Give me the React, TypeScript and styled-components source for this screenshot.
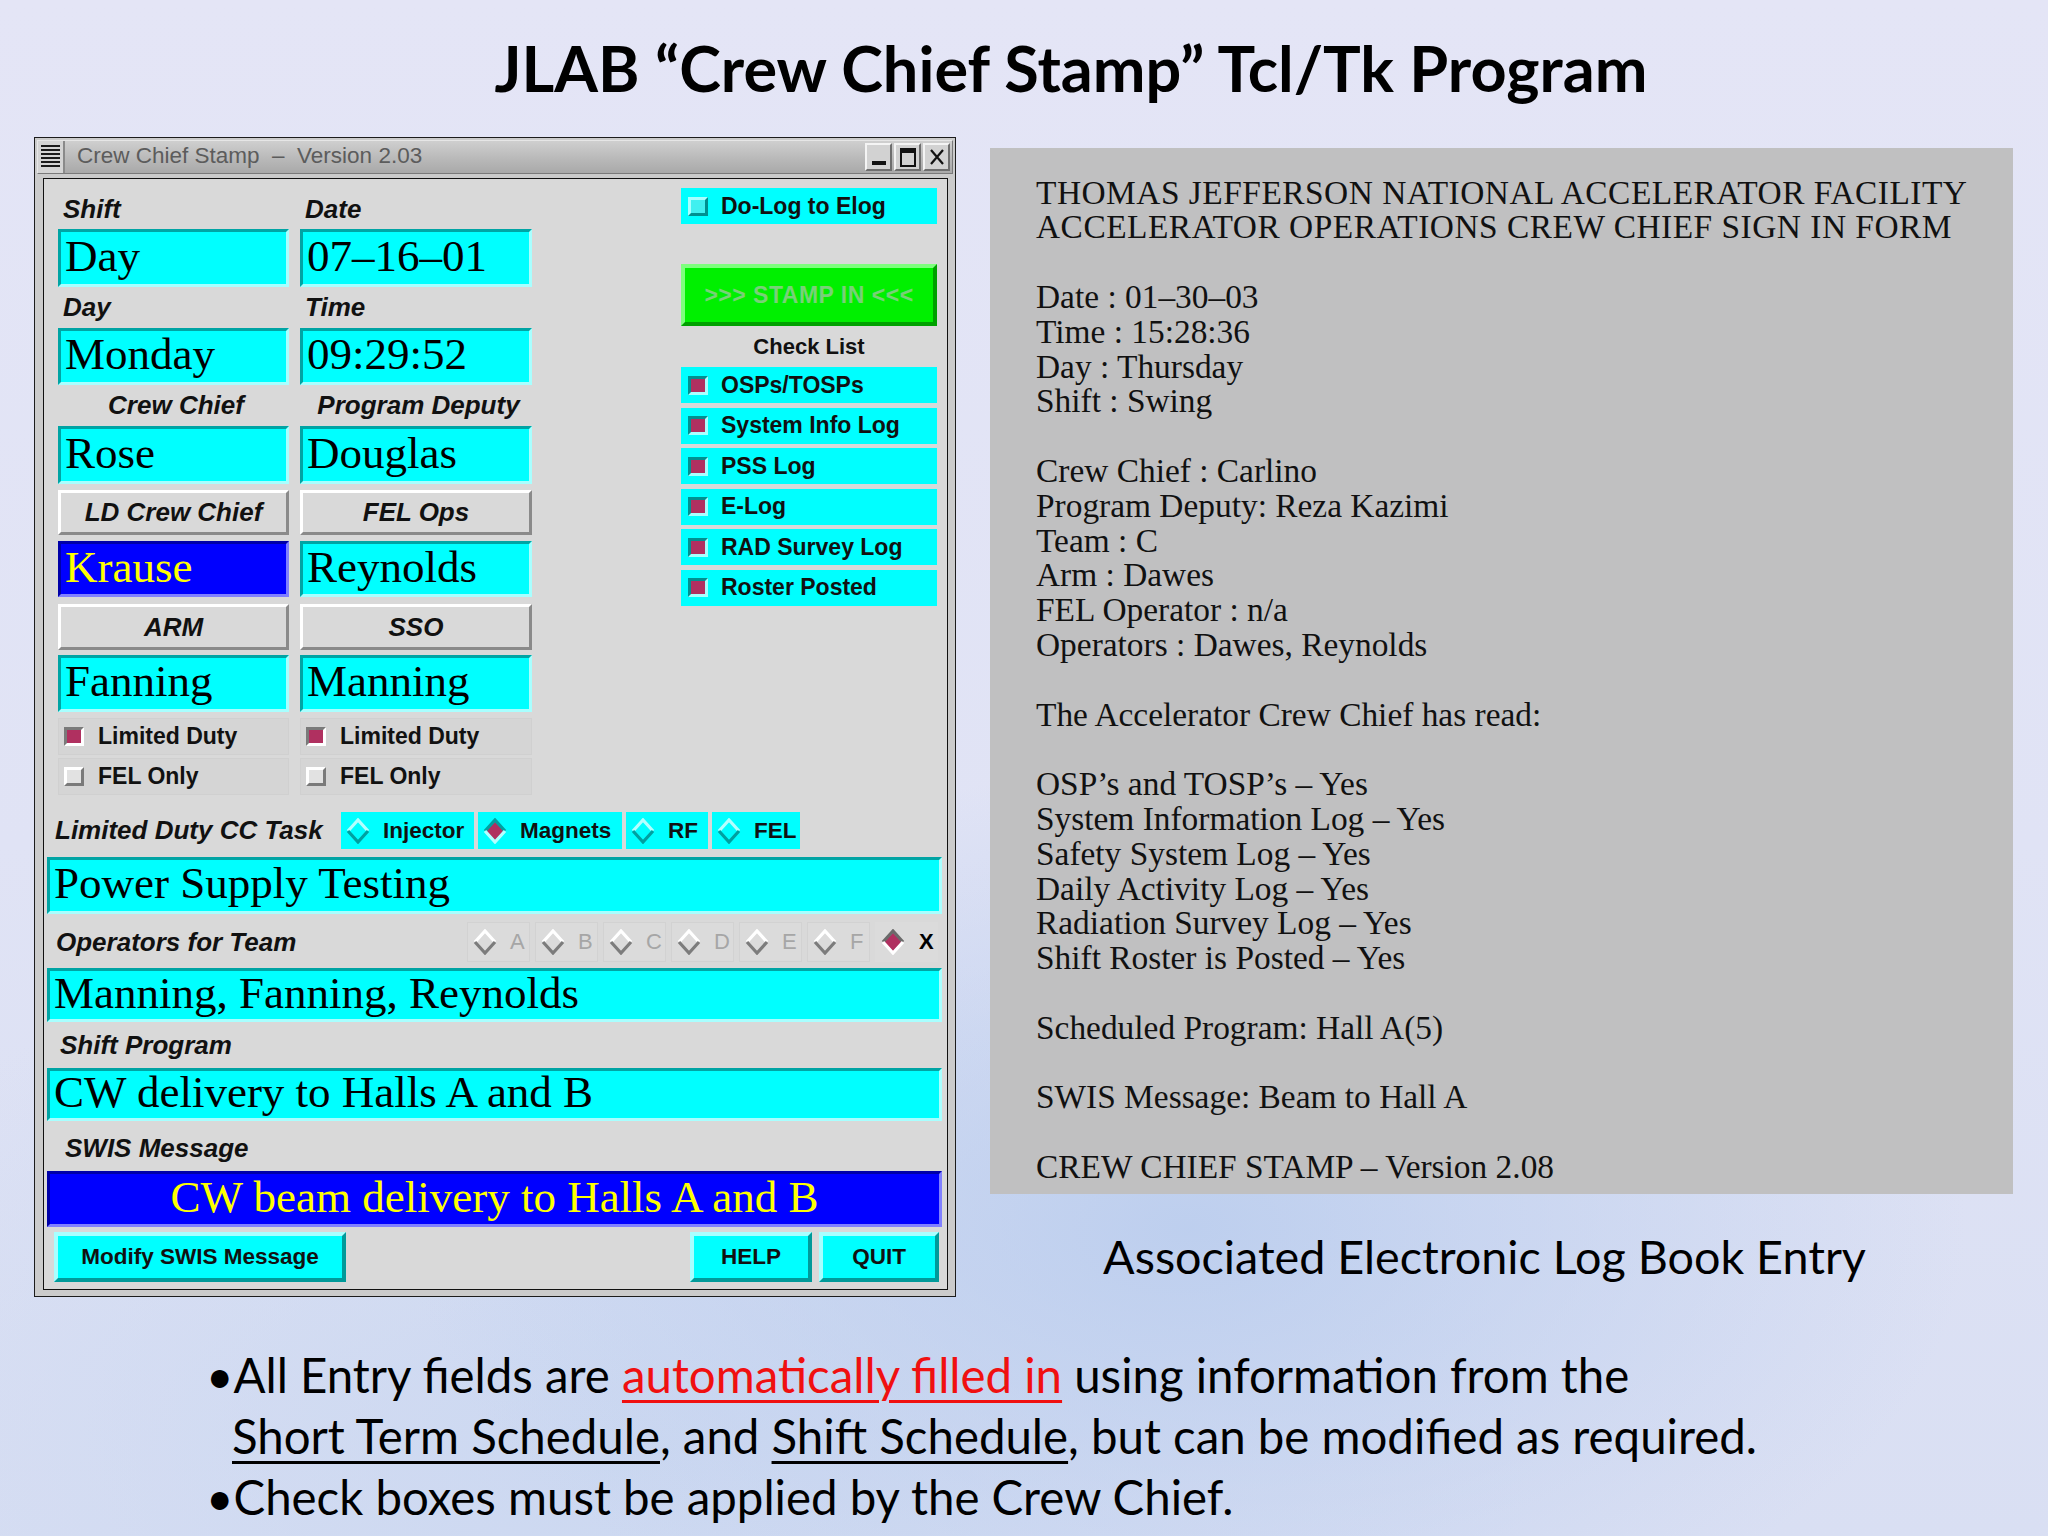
import React from "react";
import styled, { createGlobalStyle, css } from "styled-components";

const CYAN = "#00ffff";
const TEAL = "#00a4a4";
const PALE = "#a8ffff";
const MAROON = "#b03060";
const GREY = "#d9d9d9";

const GlobalStyle = createGlobalStyle`
  html, body {
    margin: 0;
    padding: 0;
  }
  body {
    width: 2048px;
    height: 1536px;
    overflow: hidden;
    font-family: "Liberation Sans", Arial, sans-serif;
  }
`;

const bevel = (light: string, dark: string, w = 3) => css`
  border-style: solid;
  border-width: ${w}px;
  border-color: ${light} ${dark} ${dark} ${light};
`;

const Page = styled.div`
  width: 2048px;
  height: 1536px;
  box-sizing: border-box;
  display: flex;
  flex-direction: column;
  background:
    radial-gradient(ellipse 38% 30% at 58% 80%, rgba(188, 206, 238, 0.95), rgba(188, 206, 238, 0) 100%),
    radial-gradient(ellipse 45% 35% at 30% 95%, rgba(200, 214, 240, 0.8), rgba(200, 214, 240, 0) 100%),
    linear-gradient(180deg, #e4e5f6 0%, #e0e3f5 55%, #d9dff3 100%);
`;

const Header = styled.h1`
  margin: 0;
  height: 137px;
  box-sizing: border-box;
  padding: 30px 0 0 94px;
  text-align: center;
  font-family: Lato, "Open Sans", sans-serif;
  font-weight: 700;
  font-size: 63px;
  line-height: 76px;
  color: #000;
`;

const Main = styled.div`
  display: flex;
  padding-left: 34px;
  height: 1160px;
`;

/* ---------- Tk window ---------- */

const Window = styled.div`
  width: 922px;
  height: 1160px;
  box-sizing: border-box;
  border: 1px solid #1c1c1c;
  background: #cbcbcb;
  padding: 2px;
  display: flex;
  flex-direction: column;
`;

const TitleBar = styled.div`
  height: 32px;
  display: flex;
  align-items: stretch;
  background: linear-gradient(180deg, #cfcfcf 0%, #b9b9b9 55%, #a9a9a9 100%);
  ${bevel("#e6e6e6", "#7a7a7a", 1)};
`;

const MenuGrip = styled.div`
  width: 27px;
  box-sizing: border-box;
  padding: 4px 3px;
  border-right: 2px solid #8a8a8a;
  background: #d4d4d4;

  &::before {
    content: "";
    display: block;
    height: 100%;
    background: repeating-linear-gradient(180deg, #1a1a1a 0 2px, #d4d4d4 2px 4px);
  }
`;

const WinTitle = styled.div`
  flex: 1;
  padding-left: 12px;
  font-family: "Liberation Sans", Arial, sans-serif;
  font-size: 22.5px;
  line-height: 30px;
  color: #5c5c5c;
  white-space: pre;
`;

const WinButtons = styled.div`
  display: flex;
  gap: 2px;
  padding: 2px 2px 2px 0;
`;

const WinButton = styled.div`
  width: 27px;
  box-sizing: border-box;
  background: #d2d2d2;
  ${bevel("#f4f4f4", "#6e6e6e", 2)};
  display: flex;
  align-items: center;
  justify-content: center;
  font-size: 22px;
  line-height: 1;
  color: #111;
`;

const MinGlyph = styled.span`
  width: 14px;
  height: 4px;
  background: #111;
  margin-top: 12px;
`;

const MaxGlyph = styled.span`
  width: 12px;
  height: 12px;
  border: 2px solid #111;
  border-top-width: 5px;
`;

const Client = styled.div`
  flex: 1;
  margin: 4px 5px 4px 6px;
  border: 1px solid #111;
  background: ${GREY};
  display: flex;
  flex-direction: column;
  padding: 0 5px 0 3px;
`;

const Upper = styled.div`
  display: flex;
  padding: 0 5px 0 11px;
  height: 616px;
`;

const LeftGrid = styled.div`
  display: grid;
  grid-template-columns: 231px 232px;
  column-gap: 11px;
  align-content: start;
  padding-top: 11px;
`;

const RightCol = styled.div`
  margin-left: auto;
  width: 256px;
  padding-top: 9px;
  display: flex;
  flex-direction: column;
`;

const Label = styled.div<{ $h: number; $center?: boolean; $indent?: number }>`
  height: ${(p) => p.$h}px;
  display: flex;
  align-items: center;
  justify-content: ${(p) => (p.$center ? "center" : "flex-start")};
  padding-left: ${(p) => p.$indent ?? 5}px;
  font-family: "Liberation Sans", Arial, sans-serif;
  font-style: italic;
  font-weight: 700;
  font-size: 26px;
  color: #111;
  white-space: nowrap;
`;

const Field = styled.div<{ $h: number; $mt?: number; $blue?: boolean; $center?: boolean }>`
  height: ${(p) => p.$h}px;
  margin-top: ${(p) => p.$mt ?? 0}px;
  box-sizing: border-box;
  padding: 0 4px 4px;
  overflow: hidden;
  white-space: nowrap;
  font-family: "Liberation Serif", "Times New Roman", serif;
  font-size: 45px;
  line-height: ${(p) => p.$h - 10}px;
  text-align: ${(p) => (p.$center ? "center" : "left")};
  background: ${(p) => (p.$blue ? "#0000ff" : CYAN)};
  color: ${(p) => (p.$blue ? "#ffff00" : "#000")};
  ${(p) => (p.$blue ? bevel("#0000a8", "#8080ff") : bevel(TEAL, PALE))};
`;

const GreyButton = styled.div<{ $mt: number; $h: number }>`
  height: ${(p) => p.$h}px;
  margin-top: ${(p) => p.$mt}px;
  box-sizing: border-box;
  background: ${GREY};
  ${bevel("#ffffff", "#8a8a8a")};
  display: flex;
  align-items: center;
  justify-content: center;
  font-style: italic;
  font-weight: 700;
  font-size: 26px;
  color: #111;
`;

const CheckRow = styled.div<{ $mt: number; $cyan?: boolean }>`
  height: ${(p) => (p.$cyan ? 36 : 37)}px;
  margin-top: ${(p) => p.$mt}px;
  box-sizing: border-box;
  display: flex;
  align-items: center;
  gap: ${(p) => (p.$cyan ? 13 : 14)}px;
  padding-left: ${(p) => (p.$cyan ? 7 : 5)}px;
  background: ${(p) => (p.$cyan ? CYAN : "#d5d5d5")};
  border: ${(p) => (p.$cyan ? "none" : "1px solid #d0d0d0")};
  font-weight: 700;
  font-size: 23px;
  color: #111;
  white-space: nowrap;
`;

const Box = styled.span<{ $on?: boolean; $cyan?: boolean }>`
  width: 20px;
  height: 19px;
  box-sizing: border-box;
  flex: none;
  background: ${(p) => (p.$on ? MAROON : p.$cyan ? "#40f0f0" : "#e2e2e2")};
  ${(p) => {
    const light = p.$cyan ? PALE : "#ffffff";
    const dark = p.$cyan ? "#009090" : "#7a7a7a";
    return p.$on ? bevel(dark, light, 3) : bevel(light, dark, 3);
  }};
`;

const StampButton = styled.div`
  height: 62px;
  margin-top: 40px;
  box-sizing: border-box;
  background: #00f000;
  ${bevel("#7dff7d", "#00a000", 4)};
  display: flex;
  align-items: center;
  justify-content: center;
  font-weight: 700;
  font-size: 23px;
  color: #78d078;
  letter-spacing: 0.5px;
`;

const CheckListTitle = styled.div`
  height: 41px;
  display: flex;
  align-items: center;
  justify-content: center;
  font-weight: 700;
  font-size: 22px;
  color: #111;
`;

const CheckList = styled.div`
  display: flex;
  flex-direction: column;
  gap: 4.5px;
`;

const Row = styled.div<{ $mt: number; $h: number }>`
  height: ${(p) => p.$h}px;
  margin-top: ${(p) => p.$mt}px;
  display: flex;
  align-items: stretch;
`;

const RowLabel = styled.div<{ $w?: number; $indent: number }>`
  ${(p) => (p.$w ? `width: ${p.$w}px;` : "flex: 1;")}
  flex-shrink: 0;
  box-sizing: border-box;
  padding-left: ${(p) => p.$indent}px;
  display: flex;
  align-items: center;
  font-style: italic;
  font-weight: 700;
  font-size: 26px;
  color: #111;
  white-space: nowrap;
`;

const Options = styled.div<{ $gap: number; $right?: number }>`
  display: flex;
  gap: ${(p) => p.$gap}px;
  margin-right: ${(p) => p.$right ?? 0}px;
`;

const TaskOption = styled.div<{ $w: number }>`
  width: ${(p) => p.$w}px;
  box-sizing: border-box;
  display: flex;
  align-items: center;
  gap: 13px;
  padding-left: 5px;
  background: ${CYAN};
  font-weight: 700;
  font-size: 22.5px;
  color: #111;
`;

const TeamOption = styled.div<{ $active?: boolean }>`
  width: 63px;
  box-sizing: border-box;
  display: flex;
  align-items: center;
  gap: ${(p) => (p.$active ? 14 : 13)}px;
  padding-left: 5px;
  background: #dbdbdb;
  border: 1px solid ${(p) => (p.$active ? "transparent" : "#d2d2d2")};
  font-size: 22px;
  font-weight: ${(p) => (p.$active ? 700 : 400)};
  color: ${(p) => (p.$active ? "#000" : "#a6a6a6")};
`;

const ButtonRow = styled.div`
  height: 50px;
  margin-top: 5px;
  display: flex;
  padding: 0 3px 0 7px;
  gap: 7px;
`;

const CyanButton = styled.div<{ $w: number; $push?: boolean }>`
  width: ${(p) => p.$w}px;
  margin-left: ${(p) => (p.$push ? "auto" : "0")};
  box-sizing: border-box;
  background: ${CYAN};
  ${bevel(PALE, "#009a9a", 4)};
  display: flex;
  align-items: center;
  justify-content: center;
  font-weight: 700;
  font-size: 22.5px;
  color: #111;
  white-space: nowrap;
`;

/* ---------- right side ---------- */

const RightSide = styled.div`
  margin-left: 34px;
  width: 1023px;
  display: flex;
  flex-direction: column;
`;

const LogPanel = styled.div`
  margin-top: 11px;
  height: 1046px;
  box-sizing: border-box;
  background: #c0c0c1;
  padding: 27.6px 0 0 46px;
  font-family: "Liberation Serif", "Times New Roman", serif;
  font-size: 33.4px;
  line-height: 34.8px;
  color: #111;
`;

const LogLine = styled.div<{ $caps?: boolean }>`
  white-space: pre;
  min-height: 34.8px;
  letter-spacing: ${(p) => (p.$caps ? 0.5 : 0)}px;
`;

const Caption = styled.div`
  margin-top: 34px;
  padding-right: 34px;
  text-align: center;
  font-family: Lato, "Open Sans", sans-serif;
  font-size: 46.7px;
  line-height: 56px;
  color: #000;
`;

const Bullets = styled.div`
  margin-top: 46.5px;
  padding-left: 209px;
  font-family: Lato, "Open Sans", sans-serif;
  font-size: 47.4px;
  line-height: 61px;
  color: #000;
`;

const BulletLine = styled.div<{ $indent?: number }>`
  padding-left: ${(p) => p.$indent ?? 0}px;
  white-space: nowrap;
`;

const Dot = styled.span`
  margin-left: -3px;
`;

const Mark = styled.span<{ $red?: boolean }>`
  text-decoration: underline;
  text-decoration-thickness: 3px;
  text-underline-offset: 7px;
  color: ${(p) => (p.$red ? "#f01010" : "inherit")};
`;

/* ---------- drawings ---------- */

const Diamond = ({ on, cyan }: { on?: boolean; cyan?: boolean }) => {
  const light = cyan ? "#b4ffff" : "#ffffff";
  const dark = cyan ? "#00a0a0" : "#7c7c7c";
  const top = on ? (cyan ? "#00a0a0" : "#6a6a6a") : light;
  const bottom = on ? light : dark;
  return (
    <svg width="24" height="26" viewBox="0 0 24 26">
      {on && <polygon points="12,3.5 20.5,13 12,22.5 3.5,13" fill={MAROON} />}
      <polyline points="2,13 12,2 22,13" fill="none" stroke={top} strokeWidth="3.2" />
      <polyline points="2,13 12,24 22,13" fill="none" stroke={bottom} strokeWidth="3.2" />
    </svg>
  );
};

const CloseGlyph = () => (
  <svg width="16" height="18" viewBox="0 0 16 18">
    <path d="M2 2 L14 16 M14 2 L2 16" stroke="#111" strokeWidth="2.2" />
  </svg>
);

/* ---------- data ---------- */

const checklist = ["OSPs/TOSPs", "System Info Log", "PSS Log", "E-Log", "RAD Survey Log", "Roster Posted"];

const tasks = [
  { name: "Injector", on: false, w: 133 },
  { name: "Magnets", on: true, w: 144 },
  { name: "RF", on: false, w: 82 },
  { name: "FEL", on: false, w: 88 },
];

const team = ["A", "B", "C", "D", "E", "F"];

const logLines = [
  "THOMAS JEFFERSON NATIONAL ACCELERATOR FACILITY",
  "ACCELERATOR OPERATIONS CREW CHIEF SIGN IN FORM",
  "",
  "Date : 01–30–03",
  "Time : 15:28:36",
  "Day : Thursday",
  "Shift : Swing",
  "",
  "Crew Chief : Carlino",
  "Program Deputy: Reza Kazimi",
  "Team : C",
  "Arm : Dawes",
  "FEL Operator : n/a",
  "Operators : Dawes, Reynolds",
  "",
  "The Accelerator Crew Chief has read:",
  "",
  "OSP’s and TOSP’s – Yes",
  "System Information Log – Yes",
  "Safety System Log – Yes",
  "Daily Activity Log – Yes",
  "Radiation Survey Log – Yes",
  "Shift Roster is Posted – Yes",
  "",
  "Scheduled Program: Hall A(5)",
  "",
  "SWIS Message: Beam to Hall A",
  "",
  "CREW CHIEF STAMP – Version 2.08",
];

const CrewChiefWindow = () => (
  <Window>
    <TitleBar>
      <MenuGrip />
      <WinTitle>Crew Chief Stamp  –  Version 2.03</WinTitle>
      <WinButtons>
        <WinButton>
          <MinGlyph />
        </WinButton>
        <WinButton>
          <MaxGlyph />
        </WinButton>
        <WinButton>
          <CloseGlyph />
        </WinButton>
      </WinButtons>
    </TitleBar>

    <Client>
      <Upper>
        <LeftGrid>
          <Label $h={39}>Shift</Label>
          <Label $h={39}>Date</Label>
          <Field $h={58}>Day</Field>
          <Field $h={58}>07–16–01</Field>

          <Label $h={41}>Day</Label>
          <Label $h={41}>Time</Label>
          <Field $h={57}>Monday</Field>
          <Field $h={57}>09:29:52</Field>

          <Label $h={41} $center>
            Crew Chief
          </Label>
          <Label $h={41} $center>
            Program Deputy
          </Label>
          <Field $h={58}>Rose</Field>
          <Field $h={58}>Douglas</Field>

          <GreyButton $mt={6} $h={45}>
            LD Crew Chief
          </GreyButton>
          <GreyButton $mt={6} $h={45}>
            FEL Ops
          </GreyButton>
          <Field $h={56} $mt={6} $blue>
            Krause
          </Field>
          <Field $h={56} $mt={6}>
            Reynolds
          </Field>

          <GreyButton $mt={7} $h={46}>
            ARM
          </GreyButton>
          <GreyButton $mt={7} $h={46}>
            SSO
          </GreyButton>
          <Field $h={57} $mt={5}>
            Fanning
          </Field>
          <Field $h={57} $mt={5}>
            Manning
          </Field>

          <CheckRow $mt={6}>
            <Box $on />
            Limited Duty
          </CheckRow>
          <CheckRow $mt={6}>
            <Box $on />
            Limited Duty
          </CheckRow>
          <CheckRow $mt={3}>
            <Box />
            FEL Only
          </CheckRow>
          <CheckRow $mt={3}>
            <Box />
            FEL Only
          </CheckRow>
        </LeftGrid>

        <RightCol>
          <CheckRow $mt={0} $cyan>
            <Box $cyan />
            Do-Log to Elog
          </CheckRow>
          <StampButton>&gt;&gt;&gt; STAMP IN &lt;&lt;&lt;</StampButton>
          <CheckListTitle>Check List</CheckListTitle>
          <CheckList>
            {checklist.map((item) => (
              <CheckRow key={item} $mt={0} $cyan>
                <Box $on $cyan />
                {item}
              </CheckRow>
            ))}
          </CheckList>
        </RightCol>
      </Upper>

      <Row $mt={17} $h={37}>
        <RowLabel $w={294} $indent={8}>
          Limited Duty CC Task
        </RowLabel>
        <Options $gap={4}>
          {tasks.map((t) => (
            <TaskOption key={t.name} $w={t.w}>
              <Diamond cyan on={t.on} />
              {t.name}
            </TaskOption>
          ))}
        </Options>
      </Row>

      <Field $h={57} $mt={8}>
        Power Supply Testing
      </Field>

      <Row $mt={8} $h={40}>
        <RowLabel $indent={9}>Operators for Team</RowLabel>
        <Options $gap={5} $right={4}>
          {team.map((t) => (
            <TeamOption key={t}>
              <Diamond />
              {t}
            </TeamOption>
          ))}
          <TeamOption $active>
            <Diamond on />X
          </TeamOption>
        </Options>
      </Row>

      <Field $h={54} $mt={6}>
        Manning, Fanning, Reynolds
      </Field>

      <Row $mt={4} $h={38}>
        <RowLabel $indent={13}>Shift Program</RowLabel>
      </Row>

      <Field $h={53} $mt={4}>
        CW delivery to Halls A and B
      </Field>

      <Row $mt={8} $h={38}>
        <RowLabel $indent={18}>SWIS Message</RowLabel>
      </Row>

      <Field $h={56} $mt={4} $blue $center>
        CW beam delivery to Halls A and B
      </Field>

      <ButtonRow>
        <CyanButton $w={292}>Modify SWIS Message</CyanButton>
        <CyanButton $w={122} $push>
          HELP
        </CyanButton>
        <CyanButton $w={120}>QUIT</CyanButton>
      </ButtonRow>
    </Client>
  </Window>
);

export default function App() {
  return (
    <>
      <GlobalStyle />
      <Page>
        <Header>JLAB “Crew Chief Stamp” Tcl/Tk Program</Header>
        <Main>
          <CrewChiefWindow />
          <RightSide>
            <LogPanel>
              {logLines.map((line, i) => (
                <LogLine key={i} $caps={i < 2}>
                  {line}
                </LogLine>
              ))}
            </LogPanel>
            <Caption>Associated Electronic Log Book Entry</Caption>
          </RightSide>
        </Main>
        <Bullets>
          <BulletLine>
            <Dot>•</Dot>All Entry fields are <Mark $red>automatically filled in</Mark> using information from the
          </BulletLine>
          <BulletLine $indent={23}>
            <Mark>Short Term Schedule</Mark>, and <Mark>Shift Schedule</Mark>, but can be modified as required.
          </BulletLine>
          <BulletLine>
            <Dot>•</Dot>Check boxes must be applied by the Crew Chief.
          </BulletLine>
        </Bullets>
      </Page>
    </>
  );
}
